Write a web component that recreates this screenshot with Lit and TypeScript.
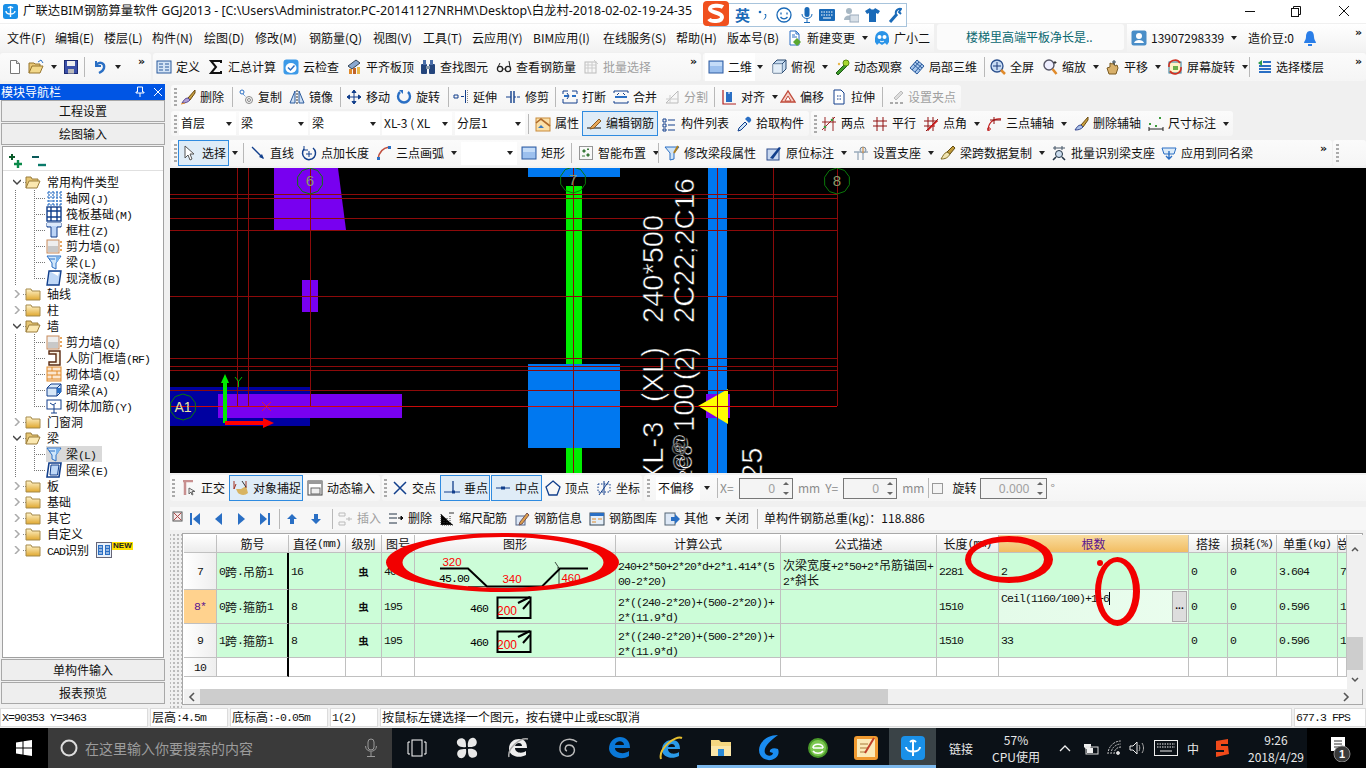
import { LitElement, html, css, svg } from 'lit';
import { customElement } from 'lit/decorators.js';

const B = '#2a6fc4', D = '#123f8c', O = '#e08a2a', Y = '#e8b84a', V = '#3a9a3a';
const I: Record<string, any> = {
  new: svg`<path d="M3.5 1.5h6l3 3v10h-9z" fill="#fff" stroke="#777"/><path d="M9.5 1.5v3h3" fill="#ddd" stroke="#777"/>`,
  open: svg`<path d="M1 14V4h5l1 1h5v2" fill="#e8c878" stroke="#96742c"/><path d="M1 14l3-7h11l-3 7z" fill="#f2d88a" stroke="#96742c"/><path d="M10 3l3-2 2 3" fill="none" stroke=${B}/>`,
  save: svg`<rect x="1.5" y="1.5" width="13" height="13" fill="#3a4fa8" stroke="#1c2a70"/><rect x="4" y="2" width="8" height="5" fill="#eee"/><rect x="5" y="10" width="6" height="4.5" fill="#bbb"/>`,
  undo: svg`<path d="M4 2v5h5" fill="none" stroke=${B} stroke-width="2"/><path d="M4 6c4-4 9-2 8 3-.5 2.500-3 4-5 5" fill="none" stroke=${B} stroke-width="2.400"/>`,
  def: svg`<rect x="1" y="2" width="14" height="12" fill="#d4e4f6" stroke="#2a5a9c"/><path d="M3 5h4M3 8h4M3 11h4M9 5h4M9 8h4M9 11h4" stroke="#2a5a9c"/>`,
  sigma: svg`<path d="M13 4V2H3l5 6-5 6h10v-2" fill="none" stroke="#111" stroke-width="2"/>`,
  cloud: svg`<rect x="0.500" y="0.500" width="15" height="15" rx="3" fill="#3c9ae8"/><ellipse cx="8" cy="9" rx="5.500" ry="5" fill="#fff"/><path d="M5 8.500l2.500 2.500 4-4.500" fill="none" stroke=${B} stroke-width="1.500"/>`,
  flush: svg`<path d="M2 7l8-6 4 3-8 6z" fill="#8aa8d0" stroke="#345"/><rect x="3" y="10" width="3" height="5" fill=${O}/><rect x="7" y="9" width="3" height="6" fill="#c0632a"/><rect x="11" y="8" width="3" height="7" fill=${Y}/>`,
  find: svg`<rect x="1" y="5" width="6" height="10" rx="1" fill="#24457c"/><rect x="9" y="5" width="6" height="10" rx="1" fill="#24457c"/><rect x="3" y="1" width="3" height="5" fill="#4a6ea8"/><rect x="10" y="1" width="3" height="5" fill="#4a6ea8"/><rect x="6" y="7" width="4" height="3" fill="#89a"/>`,
  glass: svg`<circle cx="4" cy="10" r="2.600" fill="none" stroke="#222" stroke-width="1.300"/><circle cx="12" cy="10" r="2.600" fill="none" stroke="#222" stroke-width="1.300"/><path d="M6.500 10h3M2 8l2-4M14 8l-1-6" fill="none" stroke="#222"/>`,
  batch: svg`<rect x="2" y="3" width="11" height="11" fill="none" stroke="#bbb"/><path d="M2 6h11M2 9h11M5 3v11M9 3v11M11 1l4 4" stroke="#ccc"/>`,
  r2d: svg`<rect x="1" y="2" width="14" height="12" fill="#9cc0ee" stroke="#2d5aa0"/><rect x="2" y="3" width="12" height="4" fill="#c4dcf8"/>`,
  view: svg`<path d="M2 5l4-4h9v9l-4 4H2z" fill="#c8dcf0" stroke="#2a4a70"/><path d="M2 5h9v9M11 5l4-4" fill="none" stroke="#2a4a70"/><path d="M2 5h9v9H2z" fill="#eef5fb" opacity=".7"/>`,
  orbit: svg`<path d="M2 14l9-9 2 2-9 9z" fill="#3e9a2a" stroke="#1d5a14"/><circle cx="12" cy="4" r="3" fill="#a8d830" stroke="#5a8a14"/><circle cx="5" cy="5" r="1.200" fill=${Y}/>`,
  l3d: svg`<path d="M1 9l7-8 7 6-7 8z" fill="#a8c8ee" stroke="#2a5a9c"/><path d="M4 5l7 6M6 3l7 6M3 11l7-8M6 13l7-8" stroke="#2a5a9c"/>`,
  full: svg`<circle cx="7" cy="7" r="6" fill="#c8dcf4" stroke="#2a4f8c" stroke-width="1.300"/><path d="M7 3v8M3 7h8" stroke="#1c3a7a"/><path d="M11 11l4 4" stroke=${O} stroke-width="2.500"/>`,
  zoomi: svg`<circle cx="7" cy="6" r="5" fill="#eef" stroke="#556" stroke-width="1.400"/><path d="M10.500 10l4 5" stroke=${O} stroke-width="2.500"/><path d="M13 2v3M11.500 3.500h3" stroke="#333"/>`,
  pan: svg`<path d="M3 9l2 6h7l2-6-1-3-2 1-1-3-2 1-2-1v4z" fill="#d8b06a" stroke="#7a5a20"/><path d="M10 1v5M8 3h4" stroke="#345"/>`,
  srot: svg`<rect x="2" y="3" width="12" height="11" fill="#fff3c8" stroke="#2a7a9c"/><path d="M2 8a6 6 0 0 1 11-4" fill="none" stroke="#d03020" stroke-width="1.600"/><path d="M14 8a6 6 0 0 1-11 4" fill="none" stroke="#d03020" stroke-width="1.600"/><rect x="6" y="7" width="5" height="4" fill="#6cb04a"/>`,
  floor: svg`<path d="M7 3h8M3 7h12M3 10h12M3 13h12" stroke=${B} stroke-width="2"/><path d="M6 1L2 4l4 3z" fill="#2a9a4a"/>`,
  newchg: svg`<path d="M3 1h6l3 3v11H3z" fill="#fff" stroke=${B}/><path d="M9 1v3h3M5 5h3M5 7h5" fill="none" stroke=${B}/><path d="M10 8l4 4-4 4-4-4z" fill="#5aa830"/>`,
  masc: svg`<path d="M1 8a7 7 0 0 1 14 0v4l-2 3-2-2-3 2-3-2-2 2-2-3z" fill="#2a94e8"/><circle cx="5.500" cy="7" r="2" fill="#fff"/><circle cx="10.500" cy="7" r="2" fill="#fff"/><path d="M6 11c1 1 3 1 4 0" fill="none" stroke="#fff"/>`,
  user: svg`<rect x="0.500" y="0.500" width="15" height="15" rx="2" fill="#4a8ec8"/><circle cx="8" cy="6" r="3" fill="#fff"/><path d="M3 13c1-4 9-4 10 0z" fill="#fff"/>`,
  bell: svg`<path d="M8 1c3 0 4 3 4 6 0 3 2 4 2 6H2c0-2 2-3 2-6 0-3 1-6 4-6z" fill="#2a7ee8"/><path d="M6 14h4v2H6z" fill="#2a7ee8"/>`,
  erase: svg`<path d="M15 1L8 9l2 2 5-7z" fill="#c8a040" stroke="#6a4a10"/><path d="M8 9c-3 0-4 2-6 5 3 0 6-.500 8-3z" fill="#b0a0d8" stroke="#5a4a90"/><path d="M1 15l4-1" stroke=${O}/>`,
  copy: svg`<circle cx="4" cy="3" r="2" fill="none" stroke=${B}/><circle cx="11" cy="11" r="3.500" fill="none" stroke="#888"/><circle cx="11" cy="11" r="1.500" fill="none" stroke="#888"/><path d="M5 5l3 3" stroke=${B} stroke-dasharray="1 1"/>`,
  mirror: svg`<path d="M6 2L1 14h5z" fill="#cfe0f4" stroke="#2a5a9c"/><path d="M10 2l5 12h-5z" fill="#cfe0f4" stroke="#2a5a9c"/><path d="M8 1v14" stroke="#333" stroke-dasharray="2 1"/>`,
  move: svg`<path d="M8 1v14M1 8h14M8 1L6 3.500h4zM8 15l-2-2.500h4zM1 8l2.500-2v4zM15 8l-2.500-2v4z" fill=${D} stroke=${D}/>`,
  rot: svg`<path d="M4 3a6 6 0 1 0 8 0" fill="none" stroke=${B} stroke-width="2.400"/><path d="M3 1h4v4z" fill=${B}/>`,
  extend: svg`<path d="M1 6h4v3H1zM8 7.500h3M12.500 1v13" fill="none" stroke=${D}/><path d="M14.500 1v13" stroke="#888" stroke-dasharray="1 1"/>`,
  trim: svg`<path d="M1 8h5M9 8h2M12 8h3" stroke=${D}/><path d="M6 2v12M9 2v12" stroke=${D} stroke-width="1.400"/>`,
  brk: svg`<path d="M1 5v-3h5M10 2h5v3M1 10v4h14v-4" fill="none" stroke=${D}/><path d="M2 7h4M10 7h4" stroke=${B} stroke-width="2"/><path d="M5 4l2 3-2 3" fill="none" stroke=${D}/>`,
  merge: svg`<path d="M1 4v-2h14v2M1 12v2h14v-2" fill="none" stroke=${D}/><path d="M2 8h12" stroke=${B} stroke-width="2"/><path d="M6 4l-2 2M10 4l2 2" stroke=${D}/>`,
  split: svg`<path d="M2 14L14 2v12z" fill="none" stroke="#bbb"/><path d="M2 10h12M6 6v8" stroke="#ccc"/>`,
  align: svg`<path d="M2 1v14h13" fill="none" stroke="#b02020" stroke-width="1.200"/><rect x="5" y="3" width="6" height="10" fill=${B}/><path d="M8 1v4M6 3l2-2 2 2" fill="none" stroke="#fff"/>`,
  offset: svg`<path d="M1 13l7-11 7 11z" fill="#f6d0c8" stroke="#c04a3a" stroke-width="1.300"/><path d="M5 12l3-5 3 5z" fill="#fff" stroke="#c04a3a"/>`,
  stretch: svg`<path d="M3 1h7l3 3v11H3z" fill="#fff" stroke=${D}/><path d="M6 7h4M6 10h5" stroke=${D} stroke-dasharray="1.500 1"/>`,
  gpt: svg`<path d="M13 2L6 9l2 2 7-7z" fill="#ddd" stroke="#bbb"/><path d="M2 14h3M7 14h3M12 14h3" stroke="#aaa" stroke-width="2"/>`,
  attr: svg`<rect x="1" y="2" width="14" height="13" fill="#fbe0a8" stroke="#c88a3a"/><path d="M1 7l5-4 9 7" fill="none" stroke="#b06a2a" stroke-width="1.600"/><path d="M3 12h6l-3-3z" fill="#3a7ac0"/>`,
  edit: svg`<path d="M1 12h14" stroke="#111"/><path d="M5 11l8-8 2 2-7 7-4 1z" fill="#e8a85a" stroke="#8a5a20"/>`,
  list: svg`<path d="M2 3h3v3H2zM2 8h3v3H2zM2 13h3v2H2zM7 4h7M7 9h7M7 14h7" fill="none" stroke=${D}/>`,
  pick: svg`<path d="M9 6l-6 6-1 3 3-1 6-6z" fill="#d0e6f8" stroke=${D}/><path d="M9 3l4 4 2-2c1-2-2-5-4-4z" fill=${B}/>`,
  twop: svg`<path d="M1 14L14 1M4 1v14M12 1v14M1 6h14" stroke="#901010" stroke-width=".9"/><circle cx="4" cy="11" r="1.300" fill=${V}/><circle cx="11" cy="4" r="1.300" fill=${V}/>`,
  para: svg`<path d="M1 5h14M1 10h14M5 1v14M11 1v14" stroke="#901010"/>`,
  ang: svg`<path d="M1 5h14M1 10h11M5 1v14M10 1v14M3 15L15 3" stroke="#901010"/><path d="M5 14l9-9" stroke="#d02020" stroke-width="1.600"/>`,
  arc3: svg`<path d="M2 15C2 7 7 2 15 3" fill="none" stroke="#c02020" stroke-width="1.300"/><circle cx="3" cy="13" r="1.300" fill="none" stroke="#c02020"/><path d="M8 1v7M4 4h11" stroke="#901010"/>`,
  delax: svg`<path d="M15 1L8 9l2 2 5-7z" fill="#c8a040" stroke="#6a4a10"/><path d="M8 9c-3 0-4 2-6 5 3 0 6-.500 8-3z" fill="#a8c0e8" stroke="#3a4a90"/>`,
  dim: svg`<path d="M1 11v4M15 11v4M1 13h14" stroke="#222"/><rect x="1" y="7" width="2" height="2" fill=${V}/><rect x="11" y="1" width="2" height="2" fill=${V}/><rect x="7" y="9" width="2" height="2" fill=${V}/>`,
  sel: svg`<path d="M3 1v12l3-3 2 5 2-1-2-5h4z" fill="#fff" stroke="#555"/>`,
  ln: svg`<path d="M2 2l11 11" stroke=${D} stroke-width="1.300"/><path d="M14 14l-2-5-3 3z" fill=${D}/>`,
  ptl: svg`<path d="M3 4a6.500 6.500 0 1 0 9-1" fill="none" stroke=${D} stroke-width="1.500"/><path d="M3 1v4h4" fill="none" stroke=${D}/><path d="M8 6v6M5 9h6" stroke=${D}/>`,
  arc: svg`<path d="M2 14C3 7 7 3 13 2" fill="none" stroke="#c05040" stroke-width="1.600"/><rect x="1" y="12" width="3" height="3" fill=${B}/><rect x="12" y="1" width="3" height="3" fill=${B}/>`,
  smart: svg`<rect x="1.500" y="1.500" width="13" height="13" fill="none" stroke="#333" stroke-dasharray="1 1"/><path d="M5 5h2v2H5zM9 9h2v2H9zM9 4l1 1 1-1zM4 11h3" fill="#3a7a3a" stroke="#3a7a3a"/>`,
  mods: svg`<path d="M1 2h14l-5 6v6l-4 1V8z" fill="#d0e4f6" stroke=${B}/><path d="M14 1l-4 7" stroke="#b08020" stroke-width="2"/>`,
  pos: svg`<rect x="1" y="4" width="12" height="11" fill="#c8d8f0" stroke="#2a4a8c"/><path d="M4 13L13 2l2 1-8 11z" fill=${D}/>`,
  supp: svg`<circle cx="10" cy="5" r="3" fill="#dde6f0" stroke="#789"/><path d="M1 7h14M5 7v8M10 8v7" stroke="#9ab" stroke-width="1.300"/><path d="M10 2v6" stroke=${O}/>`,
  cspan: svg`<path d="M13 1l2 2-5 6-3-2z" fill="#c09a3a" stroke="#604a10"/><path d="M7 7c-3 1-4 4-6 7 4 0 7-1 9-5z" fill="#f0e4b0" stroke="#806a20"/>`,
  bsup: svg`<path d="M2 3h12M4 1v4M11 1v4" stroke="#456"/><circle cx="8" cy="9" r="3.500" fill="#cde" stroke="#234"/><path d="M11 12l3 3M2 15l3-3" stroke="#234" stroke-width="1.600"/>`,
  apply: svg`<path d="M1 3h14l-2 6H3z" fill="#dcebf8" stroke=${B}/><path d="M8 6v7M5 11l3 3 3-3" fill="none" stroke=${B} stroke-width="1.400"/>`,
  ortho: svg`<path d="M2 1h10M4 1v14" stroke="#c89090" stroke-width="2.500"/><path d="M8 8v6l2-2 1 3 1-.500-1-3h3z" fill="#eee" stroke="#666"/>`,
  snap: svg`<path d="M3 9h5l5-3 2 7c-3 3-8 2-10 0z" fill="#d8b462"/><path d="M1 1v8M1 9L3 4M13 1v7" stroke="#a03020"/><path d="M9 1l4 6" stroke="#333"/>`,
  dyn: svg`<rect x="1" y="1" width="14" height="14" fill="#fff" stroke="#444"/><rect x="1" y="1" width="14" height="3" fill="#999"/><rect x="4" y="8" width="9" height="6" fill="#eee" stroke="#666"/>`,
  cross: svg`<path d="M2 2l12 12M14 2L2 14" stroke=${D} stroke-width="1.500"/>`,
  perp: svg`<path d="M9 1v10" stroke=${D} stroke-width="1.300"/><path d="M0 12h16" stroke=${D}/><rect x="8" y="10.500" width="3" height="3" fill=${D}/>`,
  mid: svg`<path d="M1 8h14" stroke=${D}/><rect x="6" y="6.500" width="4" height="3" fill=${D}/>`,
  vert: svg`<path d="M8 1l7 6-3 8H4L1 7z" fill="none" stroke=${D} stroke-width="1.300"/>`,
  coord: svg`<path d="M2 4h12v8H2z" fill="none" stroke=${D} stroke-dasharray="1.500 1.500"/><path d="M8 1v14M3 15L13 1" stroke=${D}/>`,
  first: svg`<rect x="3" y="2" width="2" height="12" fill=${B}/><path d="M13 2v12L6 8z" fill=${B}/>`,
  prev: svg`<path d="M12 2v12L5 8z" fill=${B}/>`,
  next: svg`<path d="M4 2v12l7-6z" fill=${B}/>`,
  last: svg`<rect x="11" y="2" width="2" height="12" fill=${B}/><path d="M3 2v12l7-6z" fill=${B}/>`,
  up: svg`<path d="M8 3l5 5h-3v5H6V8H3z" fill=${B}/>`,
  down: svg`<path d="M8 13l5-5h-3V3H6v5H3z" fill=${B}/>`,
  ins: svg`<path d="M2 2h6v3H2zM2 11h6v3H2zM9 8h6M12 6v4" fill="none" stroke="#bbb"/>`,
  del: svg`<path d="M1 3h8M1 7h8M1 12h8" stroke="#234"/><path d="M10 7h3M13 5l2 2-2 2z" fill="#111" stroke="#111"/>`,
  scale: svg`<path d="M2 3v11h12M5 9v5M8 7v7M11 5v9" stroke="#333" stroke-dasharray="1 1"/><path d="M10 2h5" stroke="#333"/>`,
  info: svg`<rect x="2" y="5" width="9" height="9" fill="#dde8f6" stroke="#568"/><path d="M13 2l-7 9-1 3 3-1 7-9z" fill="#e0a04a" stroke="#755"/>`,
  lib: svg`<rect x="1" y="2" width="14" height="12" fill="#e4eef8" stroke="#345"/><rect x="1" y="2" width="14" height="3" fill=${B}/><path d="M3 8h4M9 8h4M3 11h4" stroke=${O}/>`,
  other: svg`<rect x="1" y="2" width="10" height="12" fill="#dde8f6" stroke="#567"/><path d="M7 6h4V3l5 5-5 5v-3H7z" fill=${B}/>`,
  xclose: svg`<rect x="2" y="1" width="9" height="9" fill="#f4e8e8" stroke="#555"/><path d="M3 2l7 7M10 2l-7 7" stroke="#b04a4a"/>`,
  fgrid: svg`<path d="M1 3h14M1 7h14M1 11h14M1 15h14M3 1v14M7 1v14M11 1v14M15 1v14" stroke=${B} stroke-width="1.200" stroke-dasharray="2 1"/>`,
  raft: svg`<rect x="1" y="1" width="14" height="14" fill="#fff" stroke=${D} stroke-width="1.400"/><path d="M1 5h14M1 11h14M5 1v14M11 1v14" stroke=${D} stroke-width="1.400"/>`,
  col: svg`<path d="M1 1h14v4h-4v10H5V5H1z" fill="#bcd4f6" stroke=${D}/><rect x="1" y="1" width="14" height="3" fill="#dbe8fa"/>`,
  wall: svg`<rect x="1" y="2" width="12" height="13" fill="#eee" stroke="#c88a5a"/><rect x="2" y="8" width="10" height="6" fill="#c8c8c8"/><path d="M14 4h2M14 8h2M14 12h2" stroke=${O} stroke-width="1.400"/>`,
  beam: svg`<path d="M1 2h14l-5 7v6l-4-2V9z" fill="#cfe6fb" stroke=${B}/><path d="M10 3h5L10 9z" fill="#7bb4ec"/><path d="M3 5h6" stroke=${B}/>`,
  slab: svg`<path d="M3 1h12l-2 14H1z" fill="#bfd8f7" stroke=${D} stroke-width="1.400"/><path d="M5 2l8 0-1 4z" fill="#fff"/>`,
  door: svg`<path d="M3 1h11v14H3v-3h7V4H3z" fill="#f8f0e0" stroke="#5a2a10" stroke-width="1.400"/>`,
  brick: svg`<rect x="1" y="1" width="14" height="14" fill="#fbe6d0" stroke=${O}/><path d="M1 5h14M1 9h14M1 13h14M6 1v4M11 5v4M6 9v4" stroke=${O}/>`,
  dbeam: svg`<path d="M1 6l4-4h10v8l-4 4H1z" fill="#d8e8f8" stroke=${D}/><path d="M1 6h10v8M11 6l4-4" fill="none" stroke=${D}/><rect x="11" y="6" width="4" height="5" fill=${B}/>`,
  wallr: svg`<rect x="1" y="2" width="14" height="9" fill="#fff" stroke=${D}/><path d="M4 5l3 2 3-2M8 7v8M5 15h6" fill="none" stroke=${D}/>`,
  ring: svg`<path d="M3 1h12l-2 14H1z" fill="#fff" stroke=${D} stroke-width="1.600"/><path d="M5 3h8l-1.500 10H4z" fill="#bfd8f7" stroke=${D}/>`,
  cad: svg`<rect x="0.500" y="0.500" width="15" height="15" fill="#e8f0fa" stroke="#667"/><rect x="2" y="3" width="5" height="10" fill=${B}/><rect x="9" y="3" width="5" height="10" fill=${B}/><path d="M3 5h3M3 8h3M3 11h3M10 5h3M10 8h3M10 11h3" stroke="#fff"/>`,
};
const ic = (n: string) => html`<svg class="ic" viewBox="0 0 16 16" width="16" height="16">${I[n]}</svg>`;
const folder = (op: boolean) => op
  ? html`<svg class="fd" viewBox="0 0 16 14" width="16" height="14"><path d="M1 13V2h5l1 2h6v3" fill="#e6c674" stroke="#9a7c3a"/><path d="M1 13l3-7h11l-3 7z" fill="#fbe8b0" stroke="#9a7c3a"/></svg>`
  : html`<svg class="fd" viewBox="0 0 16 14" width="16" height="14"><defs><linearGradient id="fg" x1="0" y1="0" x2="0" y2="1"><stop offset="0" stop-color="#fff4cc"/><stop offset="1" stop-color="#e0a830"/></linearGradient></defs><path d="M1 13V2h5l1 2h8v9z" fill="url(#fg)" stroke="#a58a4a"/></svg>`;

const mix = (s: string) => s.split(/([\x00-\x7f]+)/).filter(Boolean).map(p => /^[\x00-\x7f]/.test(p) ? html`<span class="m">${p}</span>` : p);

type It = { x: number; i?: string; t?: string; a?: boolean; g?: boolean; on?: number; wh?: number; k?: string; w?: number };
type Bar = { x0: number; x1: number; items: It[]; plain?: boolean };

function cell(it: It, w: number) {
  const st = `width:${w}px`;
  if (it.k === 'sep') return html`<div class="cell" style=${st}><i class="sep"></i></div>`;
  if (it.k === 'grip') return html`<div class="cell" style=${st}><i class="grip"></i></div>`;
  if (it.k === 'more') return html`<div class="cell more" style=${st}>»</div>`;
  if (it.k === 'arrow') return html`<div class="cell" style=${st}><i class="arr"></i></div>`;
  if (it.k === 'sel') return html`<div class="cell" style=${st}><div class="sel" style="width:${it.w}px"><span>${it.t}</span><i class="arr"></i></div></div>`;
  const inner = html`${it.i ? ic(it.i) : ''}${it.t ? html`<span class="lab">${it.t}</span>` : ''}`;
  const arrow = it.a ? html`<i class="arr gap"></i>` : '';
  if (it.on) return html`<div class="cell" style=${st}><div class="it on" style="width:${it.on}px">${inner}</div>${arrow}</div>`;
  if (it.wh) return html`<div class="cell" style=${st}><div class="it wh" style="width:${it.wh}px">${inner}</div><i class="arr" style="margin-left:2px"></i></div>`;
  return html`<div class="cell ${it.g ? 'gr' : ''}" style=${st}><div class="it">${inner}${arrow}</div></div>`;
}
function bar(b: Bar, ml: number) {
  return html`<div class="bar ${b.plain ? 'plain' : ''}" style="width:${b.x1 - b.x0}px;margin-left:${ml}px;padding-left:${b.items[0].x - b.x0}px">
    ${b.items.map((it, n) => cell(it, (b.items[n + 1]?.x ?? b.x1) - it.x))}</div>`;
}
function row(cls: string, start: number, bars: Bar[]) {
  let p = start;
  return html`<div class="row ${cls}">${bars.map(b => { const m = b.x0 - p; p = b.x1; return bar(b, m); })}</div>`;
}

const R1: Bar[] = [
  { x0: 0, x1: 151, items: [{ x: 7, i: 'new' }, { x: 28, i: 'open', a: true }, { x: 63, i: 'save' }, { x: 84, k: 'sep' }, { x: 92, i: 'undo', a: true }, { x: 138, k: 'more' }] },
  { x0: 153, x1: 701, items: [{ x: 156, i: 'def', t: '定义' }, { x: 208, i: 'sigma', t: '汇总计算' }, { x: 283, i: 'cloud', t: '云检查' }, { x: 346, i: 'flush', t: '平齐板顶' }, { x: 420, i: 'find', t: '查找图元' }, { x: 496, i: 'glass', t: '查看钢筋量' }, { x: 583, i: 'batch', t: '批量选择', g: true }, { x: 690, k: 'more' }] },
  { x0: 703, x1: 1366, items: [{ x: 705, i: 'r2d', t: '二维', wh: 50 }, { x: 771, i: 'view', t: '俯视', a: true }, { x: 834, i: 'orbit', t: '动态观察' }, { x: 909, i: 'l3d', t: '局部三维' }, { x: 984, k: 'sep' }, { x: 990, i: 'full', t: '全屏' }, { x: 1042, i: 'zoomi', t: '缩放', a: true }, { x: 1104, i: 'pan', t: '平移', a: true }, { x: 1167, i: 'srot', t: '屏幕旋转', a: true }, { x: 1249, k: 'sep' }, { x: 1256, i: 'floor', t: '选择楼层' }, { x: 1355, k: 'more' }] },
];
const R2: Bar[] = [{ x0: 171, x1: 961, items: [{ x: 174, k: 'grip' }, { x: 180, i: 'erase', t: '删除' }, { x: 232, k: 'sep' }, { x: 238, i: 'copy', t: '复制' }, { x: 289, i: 'mirror', t: '镜像' }, { x: 340, k: 'sep' }, { x: 346, i: 'move', t: '移动' }, { x: 396, i: 'rot', t: '旋转' }, { x: 448, k: 'sep' }, { x: 453, i: 'extend', t: '延伸' }, { x: 505, i: 'trim', t: '修剪' }, { x: 555, k: 'sep' }, { x: 562, i: 'brk', t: '打断' }, { x: 613, i: 'merge', t: '合并' }, { x: 664, i: 'split', t: '分割', g: true }, { x: 714, k: 'sep' }, { x: 721, i: 'align', t: '对齐', a: true }, { x: 780, i: 'offset', t: '偏移' }, { x: 831, i: 'stretch', t: '拉伸' }, { x: 882, k: 'sep' }, { x: 888, i: 'gpt', t: '设置夹点', g: true }] }];
const R3: Bar[] = [
  { x0: 171, x1: 809, items: [{ x: 174, k: 'grip' }, { x: 179, k: 'sel', t: '首层', w: 57 }, { x: 239, k: 'sel', t: '梁', w: 69 }, { x: 310, k: 'sel', t: '梁', w: 70 }, { x: 382, k: 'sel', t: 'XL-3 ( XL', w: 70 }, { x: 455, k: 'sel', t: '分层1', w: 70 }, { x: 528, k: 'sep' }, { x: 535, i: 'attr', t: '属性' }, { x: 582, i: 'edit', t: '编辑钢筋', on: 76 }, { x: 661, i: 'list', t: '构件列表' }, { x: 736, i: 'pick', t: '拾取构件' }] },
  { x0: 811, x1: 1233, items: [{ x: 814, k: 'grip' }, { x: 821, i: 'twop', t: '两点' }, { x: 872, i: 'para', t: '平行' }, { x: 923, i: 'ang', t: '点角', a: true }, { x: 986, i: 'arc3', t: '三点辅轴', a: true }, { x: 1073, i: 'delax', t: '删除辅轴' }, { x: 1148, i: 'dim', t: '尺寸标注', a: true }] },
];
const R4: Bar[] = [
  { x0: 171, x1: 1332, items: [{ x: 174, k: 'grip' }, { x: 178, i: 'sel', t: '选择', on: 51 }, { x: 232, k: 'arrow' }, { x: 243, k: 'sep' }, { x: 250, i: 'ln', t: '直线' }, { x: 301, i: 'ptl', t: '点加长度' }, { x: 376, i: 'arc', t: '三点画弧', a: true }, { x: 461, k: 'sel', t: '', w: 56 }, { x: 521, i: 'r2d', t: '矩形' }, { x: 571, k: 'sep' }, { x: 578, i: 'smart', t: '智能布置', a: true }, { x: 658, k: 'sep' }, { x: 664, i: 'mods', t: '修改梁段属性' }, { x: 766, i: 'pos', t: '原位标注', a: true }, { x: 853, i: 'supp', t: '设置支座', a: true }, { x: 940, i: 'cspan', t: '梁跨数据复制', a: true }, { x: 1051, i: 'bsup', t: '批量识别梁支座' }, { x: 1161, i: 'apply', t: '应用到同名梁' }, { x: 1320, k: 'more' }] },
  { x0: 1333, x1: 1366, items: [{ x: 1336, k: 'grip' }] },
];
const R5a: Bar[] = [
  { x0: 170, x1: 380, items: [{ x: 172, k: 'grip' }, { x: 181, i: 'ortho', t: '正交' }, { x: 229, i: 'snap', t: '对象捕捉', on: 74 }, { x: 307, i: 'dyn', t: '动态输入' }] },
  { x0: 382, x1: 642, items: [{ x: 384, k: 'grip' }, { x: 392, i: 'cross', t: '交点' }, { x: 440, i: 'perp', t: '垂点', on: 50 }, { x: 491, i: 'mid', t: '中点', on: 51 }, { x: 545, i: 'vert', t: '顶点' }, { x: 596, i: 'coord', t: '坐标' }] },
];
const R6: Bar[] = [{
  x0: 170, x1: 1366, plain: true, items: [{ x: 171, i: 'xclose' }, { x: 187, i: 'first' }, { x: 210, i: 'prev' }, { x: 234, i: 'next' }, { x: 257, i: 'last' }, { x: 279, k: 'sep' }, { x: 284, i: 'up' }, { x: 308, i: 'down' }, { x: 332, k: 'sep' }, { x: 337, i: 'ins', t: '插入', g: true }, { x: 388, i: 'del', t: '删除' }, { x: 439, i: 'scale', t: '缩尺配筋' }, { x: 514, i: 'info', t: '钢筋信息' }, { x: 589, i: 'lib', t: '钢筋图库' }, { x: 664, i: 'other', t: '其他', a: true }, { x: 725, t: '关闭' }, { x: 757, k: 'sep' }, { x: 764, t: '单构件钢筋总重(kg)：118.886' }],
}];
const MENU: It[] = [['文件(F)', 7], ['编辑(E)', 55], ['楼层(L)', 104], ['构件(N)', 152], ['绘图(D)', 204], ['修改(M)', 255], ['钢筋量(Q)', 309], ['视图(V)', 373], ['工具(T)', 423], ['云应用(Y)', 472], ['BIM应用(I)', 533], ['在线服务(S)', 603], ['帮助(H)', 676], ['版本号(B)', 727]].map(([t, x]) => ({ t: t as string, x: x as number }));
MENU.push({ x: 787, i: 'newchg', t: '新建变更', a: true }, { x: 874, i: 'masc', t: '广小二' });
const MENU2: It[] = [{ x: 1131, i: 'user', t: '13907298339', a: true }, { x: 1248, t: '造价豆:0' }, { x: 1302, i: 'bell' }, { x: 1355, k: 'more' }];

const TREE: any[] = [
  { o: 1, t: '常用构件类型' }, { i: 'fgrid', t: '轴网(J)' }, { i: 'raft', t: '筏板基础(M)' }, { i: 'col', t: '框柱(Z)' }, { i: 'wall', t: '剪力墙(Q)' }, { i: 'beam', t: '梁(L)' }, { i: 'slab', t: '现浇板(B)', l: 1 },
  { t: '轴线' }, { t: '柱' }, { o: 1, t: '墙' }, { i: 'wall', t: '剪力墙(Q)' }, { i: 'door', t: '人防门框墙(RF)' }, { i: 'brick', t: '砌体墙(Q)' }, { i: 'dbeam', t: '暗梁(A)' }, { i: 'wallr', t: '砌体加筋(Y)', l: 1 },
  { t: '门窗洞' }, { o: 1, t: '梁' }, { i: 'beam', t: '梁(L)', s: 1 }, { i: 'ring', t: '圈梁(E)', l: 1 },
  { t: '板' }, { t: '基础' }, { t: '其它' }, { t: '自定义' }, { t: 'CAD识别', n: 1 },
];
const WS = [184, 217, 289, 346, 382, 415, 616, 781, 937, 999, 1189, 1228, 1277, 1338, 1347];
const COLS = WS.slice(1).map((x, i) => `${x - WS[i]}px`).join(' ');
const HEAD = ['', '筋号', '直径(mm)', '级别', '图号', '图形', '计算公式', '公式描述', '长度(mm)', '根数', '搭接', '损耗(%)', '单重(kg)', '总'];

const poly = (cx: number, cy: number, r: number) => Array.from({ length: 10 }, (_, i) => `${(cx + r * Math.cos(i * Math.PI / 5 + .3)).toFixed(1)},${(cy + r * Math.sin(i * Math.PI / 5 + .3)).toFixed(1)}`).join(' ');
const oval = (cx: number, cy: number, rx: number, ry: number) => `M${cx - rx} ${cy}a${rx} ${ry} 0 1 0 ${2 * rx} 0a${rx} ${ry} 0 1 0 ${-2 * rx} 0z`;

@customElement('app-root')
export class AppRoot extends LitElement {
  static styles = css`
    :host { display: block; width: 1366px; height: 768px; overflow: hidden; position: relative; background: #f0f0f0; font: 12px/1.2 "Noto Sans CJK SC", "Noto Sans", sans-serif; color: #111; }
    * { box-sizing: border-box; }
    .m { font: 11.5px "Liberation Mono", monospace; letter-spacing: -.9px; }
    .ic { flex: none; display: block; }
    .title { height: 23px; background: #fff; display: flex; align-items: center; padding-left: 3px; position: relative; z-index: 2; font-family: "Noto Sans", "Noto Sans CJK SC", sans-serif; }
    .title .tx { margin-left: 5px; white-space: nowrap; font-size: 12.4px; flex: none; width: 680px; overflow: visible; }
    .logo { width: 15px; height: 15px; flex: none; }
    .sg { width: 198px; height: 24px; margin-left: -20px; margin-top: 6px; align-self: flex-start; border: 1px solid #a8c4dc; background: #fff; display: flex; align-items: center; flex: none; padding-left: 20px; margin-top: 3px; }
    .sgs { width: 26px; height: 27px; flex: none; z-index: 1; align-self: flex-start; }
    .sg b { color: #1a6ab8; font-size: 15px; margin-left: 5px; margin-right: 8px; }
    .sg svg { margin-right: 6px; flex: none; }
    .win { flex: 1; display: flex; justify-content: flex-end; align-items: center; }
    .win svg { display: block; }
    .row { display: flex; flex: none; }
    .bar { display: flex; align-items: center; height: 100%; background: linear-gradient(#fbfbfb, #f5f5f5); border-radius: 3px; flex: none; }
    .bar.plain { background: none; }
    .cell { flex: none; height: 100%; display: flex; align-items: center; white-space: nowrap; }
    .gr { color: #a0a0a0; }
    .it { display: flex; align-items: center; gap: 4px; height: 100%; }
    .it.on { background: #dfecf7; border: 1px solid #2f8be0; padding-left: 3px; }
    .it.wh { background: #fff; padding-left: 3px; }
    .sep { width: 1px; height: 20px; background: #b8b8b8; display: block; }
    .grip { width: 3px; height: 18px; display: block; background: repeating-linear-gradient(#aaa 0 2px, transparent 2px 4px); }
    .more { font: bold 11px/1 "DejaVu Sans", sans-serif; align-items: flex-start; padding-top: 3px; }
    .arr { display: block; width: 0; height: 0; border: 3px solid transparent; border-top: 4px solid #222; border-bottom: 0; flex: none; }
    .arr.gap { margin-left: 3px; }
    .sel { background: #fff; height: 23px; display: flex; align-items: center; justify-content: space-between; padding: 0 4px 0 2px; font-size: 12px; }
    .r1 { height: 32px; padding: 1px 0 3px; }
    .menu { height: 29px; position: relative; padding-top: 1px; }
    .menu .bar { background: linear-gradient(#fff, #f2f2f2); border-radius: 0; }
    .tbox { background: #fbfbfb; width: 187px; height: 26px; margin-left: 3px; border-radius: 3px; color: #0a6870; display: flex; align-items: center; padding-left: 29px; flex: none; }
    .body { display: flex; height: 624px; }
    .left { width: 170px; flex: none; display: flex; flex-direction: column; padding: 0 5px 3px 0; }
    .lhead { height: 16px; background: #0055e4; color: #fff; display: flex; align-items: center; padding-left: 1px; font-size: 12px; flex: none; }
    .lhead span { flex: 1; }
    .lhead svg { margin-right: 4px; }
    .lbtn { height: 22px; flex: none; margin: 0 0 1px 1px; border: 1px solid #a8a8a8; background: #eee; text-align: center; line-height: 20px; }
    .treeb { flex: 1; margin: 0 1px 1px 2px; border: 1px solid #a0a0a0; background: #fff; display: flex; flex-direction: column; min-height: 0; }
    .ttop { height: 24px; flex: none; background: #fff; border-bottom: 1px solid #e0e0e0; padding: 6px 0 0 5px; display: flex; gap: 7px; margin-bottom: 3px; }
    .tr { height: 16px; display: flex; align-items: center; white-space: nowrap; flex: none; }
    .tr.top { padding-left: 10px; background: repeating-linear-gradient(90deg, #888 0 1px, transparent 1px 2px) 20px 8px / 4px 1px no-repeat; }
    .tr.top .fd { margin-left: 4px; margin-right: 6px; }
    .chev { width: 8px; height: 8px; flex: none; }
    .tr.ch { padding-left: 43px;
      background:
        repeating-linear-gradient(#777 0 1px, transparent 1px 2px) 12px 0 / 1px 100% no-repeat,
        repeating-linear-gradient(#777 0 1px, transparent 1px 2px) 31px 0 / 1px 100% no-repeat,
        repeating-linear-gradient(90deg, #777 0 1px, transparent 1px 2px) 31px 8px / 12px 1px no-repeat; }
    .tr.ch.l { background:
        repeating-linear-gradient(#777 0 1px, transparent 1px 2px) 12px 0 / 1px 100% no-repeat,
        repeating-linear-gradient(#777 0 1px, transparent 1px 2px) 31px 0 / 1px 8px no-repeat,
        repeating-linear-gradient(90deg, #777 0 1px, transparent 1px 2px) 31px 8px / 12px 1px no-repeat; }
    .tr .tt { margin-left: 4px; padding-right: 6px; }
    .nod { display: flex; align-items: center; height: 16px; }
    .nod.s { background: #d9d9d9; }
    .new { color: #222; background: #ffe000; font: bold 8px/8px "Liberation Sans"; align-self: flex-start; padding: 0 1px; }
    .right { width: 1196px; flex: none; display: flex; flex-direction: column; }
    .r2 { height: 26px; padding-top: 1px; padding-bottom: 1px; }
    .r3 { height: 28px; padding: 1px 0 2px; }
    .r4 { height: 30px; padding: 2px 0 2px; }
    .r5 { height: 30px; padding: 2px 0 2px; display: flex; }
    .canvas { height: 305px; display: block; background: #000; flex: none; }
    .snapx { width: 724px; margin-left: 2px; height: 100%; background: linear-gradient(#fbfbfb, #f5f5f5); border-radius: 3px; display: flex; align-items: center; padding-left: 3px; flex: none; color: #8c8c8c; }
    .snapx .grip { margin-right: 6px; flex: none; }
    .sel2 { width: 44px; height: 23px; background: #fff; color: #111; padding-left: 2px; display: flex; align-items: center; flex: none; }
    .btn2 { width: 14px; display: flex; justify-content: center; margin-right: 3px; flex: none; }
    .snapx .lb { width: 19px; margin-left: 2px; flex: none; }
    .snapx .lb2 { width: 18px; margin-left: 5px; flex: none; }
    .spin { width: 54px; height: 21px; border: 1px solid #777; background: #f4f4f4; display: flex; align-items: center; justify-content: flex-end; padding-right: 3px; margin-right: 5px; color: #a0a0a0; font: 12px "Noto Sans"; gap: 8px; flex: none; }
    .spin.w { width: 67px; margin: 0 3px 0 4px; }
    .spin i { display: flex; flex-direction: column; gap: 7px; }
    .spin i::before { content: ""; border: 3px solid transparent; border-bottom: 3px solid #666; border-top: 0; }
    .spin i::after { content: ""; border: 3px solid transparent; border-top: 3px solid #666; border-bottom: 0; }
    .chk { width: 11px; height: 11px; border: 1px solid #999; background: #f4f4f4; margin: 0 9px 0 3px; flex: none; }
    .sepm { margin-left: 4px; flex: none; }
    .panel { height: 205px; display: flex; flex-direction: column; }
    .phead { height: 30px; display: flex; padding-top: 4px; flex: none; }
    .phead .row { height: 23px; background: #f7f7f7; }
    .pbody { flex: 1; display: flex; min-height: 0; }
    .gut { width: 12px; flex: none; background: radial-gradient(circle, #bbb 1px, transparent 1.200px) 2px 0 / 4px 4px; }
    .frame { width: 1181px; height: 172px; flex: none; border: 1px solid #a8a8a8; background: #fff; display: flex; flex-direction: column; padding: 1px 0 0 1px; }
    .upper { display: flex; height: 154px; flex: none; }
    .tblwrap { width: 1163px; flex: none; overflow: hidden; }
    .tbl { display: grid; grid-template-rows: 18px 37px 34px 34px 19px; width: 1163px; }
    .c { border-right: 1px solid #c0c0c0; border-bottom: 1px solid #c0c0c0; padding: 0 2px; display: flex; align-items: center; overflow: hidden; background: #ccfdd8; line-height: 13px; min-width: 0; white-space: nowrap; }
    .c.wrap { white-space: normal; word-break: break-all; display: block; align-self: stretch; padding-top: 5px; }
    .c.wrap.t4 { padding-top: 4px; }
    .c.h { background: linear-gradient(#fff, #ececec); justify-content: center; font-size: 12px; padding: 0; }
    .c.h.act { background: linear-gradient(#f9dda0, #f2bd62); color: #5a1490; }
    .c.n { background: linear-gradient(90deg, #fff, #eee); justify-content: center; }
    .c.n.act { background: #ffd28e; color: #5a1490; }
    .c.e { background: #fff; }
    .c.cn { justify-content: center; font-size: 10.5px; font-weight: bold; }
    .c.div { border-right: 2px solid #000; }
    .c.sv { padding: 0; }
    .c.ed { background: linear-gradient(90deg, #e4fbe9, #eafdee); padding: 2px 1px 0 2px; align-items: flex-start; justify-content: space-between; }
    .c.ed b { width: 15px; height: 31px; background: #ddd; border: 1px solid #aaa; font: bold 10px/28px "Liberation Sans"; text-align: center; flex: none; margin-top: -1px; }
    .c.ed u { text-decoration: none; border-right: 1px solid #000; }
    .c svg { display: block; flex: none; }
    .vs { width: 16px; flex: none; background: #f0f0f0; display: flex; flex-direction: column; align-items: stretch; }
    .vs .sp { height: 102px; padding-top: 6px; }
    .vs .th { height: 33px; background: #cdcdcd; flex: none; }
    .vs .sp2 { flex: 1; display: flex; align-items: center; justify-content: center; }
    .hs { height: 15px; display: flex; background: #f0f0f0; flex: none; align-items: center; }
    .hs .ha { width: 16px; flex: none; display: flex; justify-content: center; }
    .hs .th { width: 688px; height: 15px; background: #cdcdcd; flex: none; }
    .hs .sp { width: 450px; flex: none; }
    .status { height: 20px; display: flex; gap: 2px; flex: none; padding-bottom: 1px; }
    .status div { background: #fff; border: 1px solid #dcdcdc; padding-left: 1px; display: flex; align-items: center; flex: none; white-space: nowrap; }
    .task { height: 40px; background: #0b1117; display: flex; color: #e8e8e8; }
    .start { width: 48px; background: #000; display: flex; align-items: center; justify-content: center; flex: none; }
    .search { width: 344px; background: #3a3a3a; display: flex; align-items: center; color: #9c9c9c; font-size: 14px; padding-left: 12px; flex: none; }
    .search span { flex: 1; margin-left: 7px; }
    .search svg { flex: none; }
    .slot { flex: none; display: flex; align-items: center; justify-content: center; flex-direction: column; line-height: 17px; border-bottom: 3px solid transparent; text-align: center; padding-top: 3px; }
    .slot.u { border-bottom-color: #7cb8ec; }
    .slot.ac { background: #3a4347; border-bottom-color: #7cb8ec; }
    .slot.nt { background: #000; padding-left: 4px; }
    .over { position: absolute; left: 0; top: 0; pointer-events: none; z-index: 3; }
  `;

  canvas() {
    const hs = [194, 198, 218, 230, 296, 358, 366, 370, 390];
    const vs: [number, number][] = [[237, 406], [248, 406], [310, 406], [573, 473], [717, 473], [773, 406], [837, 406]];
    const txt = (x: number, y: number, t: string, fs = 29) => svg`<text transform="translate(${x},${y}) rotate(-90)" font-size=${fs} fill="#fff" stroke="#000" stroke-width=".5" font-family="Liberation Sans">${t}</text>`;
    return html`<svg class="canvas" width="1196" height="305" viewBox="170 168 1196 305">
      <rect x="170" y="387" width="140" height="39" fill="#0000a0"/>
      <path d="M274 168h64l8 62h-72z" fill="#7800f0"/>
      <rect x="302" y="280" width="16" height="32" fill="#7800f0"/>
      <rect x="218" y="394" width="184" height="24" fill="#7800f0"/>
      <rect x="566" y="186" width="16" height="287" fill="#00ee00"/>
      <rect x="528" y="168" width="92" height="9" fill="#0078f0"/>
      <rect x="528" y="364" width="92" height="84" fill="#0078f0"/>
      <rect x="708" y="168" width="19" height="305" fill="#0078f0"/>
      <rect x="706" y="394" width="24" height="24" fill="#7800f0"/>
      <path d="M698 406l30-17v35z" fill="#ffff00"/>
      ${hs.map(y => svg`<path d="M170 ${y + .5}H837" stroke="#8c0a0a"/>`)}
      <path d="M170 406.500H837" stroke="#c80a0a"/>
      ${vs.map(([x, e]) => svg`<path d="M${x + .5} 168V${e}" stroke="#8c0a0a"/>`)}
      ${txt(663, 323, '240*500')}${txt(663, 402, '(XL)')}${txt(663, 483, 'XL-3')}
      ${txt(694, 323, '2C22')}${txt(694, 254, ';', 26)}${txt(694, 245, '2C16', 28)}${txt(694, 380, '(2)', 27)}${txt(694, 432, '100')}
      ${txt(686, 472, '@@', 19)}${txt(692, 480, '2C8', 19)}${txt(683, 456, '@', 14)}
      ${txt(762, 480, '25')}
      ${[[310, 181, '6'], [573, 180, '7'], [837, 181, '8']].map(([x, y, t]) => svg`<polygon points=${poly(x as number, y as number, 13)} fill="none" stroke="#0a7a0a"/><text x=${x} y=${(y as number) + 5} text-anchor="middle" font-size="15" font-family="Liberation Sans" fill="#8a9a6a">${t}</text>`)}
      <polygon points=${poly(183, 407, 13)} fill="none" stroke="#0a7a0a"/>
      <text x="183" y="412" text-anchor="middle" font-size="14" font-family="Liberation Sans" fill="#e8e8a0">A1</text>
      <path d="M225 423V380" stroke="#00ee00" stroke-width="4"/><path d="M225 374l-4 9h8z" fill="#00ee00"/>
      <path d="M225 423h38" stroke="#f00" stroke-width="4"/><path d="M274 423l-11-5v10z" fill="#f00"/>
      <path d="M235 377l3.500 4.500 3.500-4.500M238.500 381.500V387" fill="none" stroke="#00ee00" stroke-width=".8"/>
      <path d="M262 402l9 9M271 402l-9 9" stroke="#f02020" stroke-width=".8"/>
    </svg>`;
  }

  grid() {
    const hoop = (dy = 0) => svg`<svg width="200" height="33" viewBox="415 ${590 + dy} 200 33">
        <text x="479" y="${612 + dy}" text-anchor="middle" font-family="Liberation Mono" font-size="11.500" letter-spacing="-.9">460</text>
        <path d="M497.500 ${597.5 + dy}H530.500V${618 + dy}H497.500Z" fill="none" stroke="#000" stroke-width="2"/>
        <path d="M518 ${603 + dy}L530 ${597 + dy}M523 ${609 + dy}L530 ${601 + dy}" stroke="#000" stroke-width="2"/>
        <text x="507" y="${615 + dy}" text-anchor="middle" font-family="Liberation Sans" font-size="12" fill="#f00">200</text></svg>`;
    const sym = html`<span>虫</span>`;
    return html`<div class="tbl" style="grid-template-columns:${COLS}">
      ${HEAD.map((h, i) => html`<div class="c h ${i === 9 ? 'act' : ''}">${mix(h)}</div>`)}
      <div class="c n"><span class="m">7</span></div>
      <div class="c div">${mix('0跨.吊筋1')}</div><div class="c"><span class="m">16</span></div><div class="c cn">${sym}</div><div class="c"><span class="m">406</span></div>
      <div class="c sv"><svg width="200" height="36" viewBox="415 553 200 36">
        <path d="M440 568.500H468L487 586.500H542L560 568.500H588" fill="none" stroke="#000" stroke-width="2"/>
        <path d="M468 586.500H488M555 562l4 6-2 0M559 570v16" fill="none" stroke="#000" stroke-width=".7"/>
        <text x="452" y="566" text-anchor="middle" font-family="Liberation Sans" font-size="11.500" fill="#f00">320</text>
        <text x="454" y="582" text-anchor="middle" font-family="Liberation Mono" font-size="11.500" letter-spacing="-.9">45.00</text>
        <text x="512" y="583" text-anchor="middle" font-family="Liberation Sans" font-size="11.500" fill="#f00">340</text>
        <text x="571" y="582" text-anchor="middle" font-family="Liberation Sans" font-size="11.500" fill="#f00">460</text>
      </svg></div>
      <div class="c wrap"><span class="m">240+2*50+2*20*d+2*1.414*(500-2*20)</span></div>
      <div class="c wrap">${mix('次梁宽度+2*50+2*吊筋锚固+2*斜长')}</div>
      <div class="c"><span class="m">2281</span></div><div class="c"><span class="m">2</span></div><div class="c"><span class="m">0</span></div><div class="c"><span class="m">0</span></div><div class="c"><span class="m">3.604</span></div><div class="c"><span class="m">7</span></div>

      <div class="c n act"><span class="m">8*</span></div>
      <div class="c div">${mix('0跨.箍筋1')}</div><div class="c"><span class="m">8</span></div><div class="c cn">${sym}</div><div class="c"><span class="m">195</span></div>
      <div class="c sv">${hoop(0)}</div>
      <div class="c wrap t4"><span class="m">2*((240-2*20)+(500-2*20))+2*(11.9*d)</span></div><div class="c"></div>
      <div class="c"><span class="m">1510</span></div>
      <div class="c ed"><u class="m">Ceil(1160/100)+1+6</u><b>...</b></div>
      <div class="c"><span class="m">0</span></div><div class="c"><span class="m">0</span></div><div class="c"><span class="m">0.596</span></div><div class="c"><span class="m">1</span></div>

      <div class="c n"><span class="m">9</span></div>
      <div class="c div">${mix('1跨.箍筋1')}</div><div class="c"><span class="m">8</span></div><div class="c cn">${sym}</div><div class="c"><span class="m">195</span></div>
      <div class="c sv">${hoop(34)}</div>
      <div class="c wrap t4"><span class="m">2*((240-2*20)+(500-2*20))+2*(11.9*d)</span></div><div class="c"></div>
      <div class="c"><span class="m">1510</span></div><div class="c"><span class="m">33</span></div>
      <div class="c"><span class="m">0</span></div><div class="c"><span class="m">0</span></div><div class="c"><span class="m">0.596</span></div><div class="c"><span class="m">1</span></div>

      <div class="c n"><span class="m">10</span></div>
      <div class="c e div"></div>${Array.from({ length: 12 }, () => html`<div class="c e"></div>`)}
    </div>`;
  }

  taskbar() {
    const sl = (w: number, c: any, cls = '') => html`<div class="slot ${cls}" style="width:${w}px">${c}</div>`;
    return html`<div class="task">
      <div class="start"><svg width="16" height="16" viewBox="0 0 16 16"><path d="M0 2.500l6.500-1V7.500H0zM7.500 1.300L16 0v7.500H7.500zM0 8.500h6.500v6L0 13.500zM7.500 8.500H16V16l-8.500-1.300z" fill="#fff"/></svg></div>
      <div class="search"><svg width="18" height="18" viewBox="0 0 18 18"><circle cx="9" cy="9" r="7.500" fill="none" stroke="#ddd" stroke-width="2"/></svg><span>在这里输入你要搜索的内容</span>
        <svg width="14" height="20" viewBox="0 0 14 20" style="margin-right:14px"><rect x="4" y="1" width="6" height="11" rx="3" fill="none" stroke="#999"/><path d="M1.500 8c0 7 11 7 11 0M7 14v4M3 18.500h8" fill="none" stroke="#999"/></svg></div>
      ${sl(49, html`<svg width="20" height="18" viewBox="0 0 20 18"><rect x="5" y="1" width="10" height="16" fill="none" stroke="#fff"/><path d="M3 3H1v12h2M17 3h2v12h-2" fill="none" stroke="#fff"/></svg>`)}
      ${sl(51, html`<svg width="24" height="24" viewBox="0 0 24 24" fill="#e8e8e8"><path d="M11 11C5 12 1 9 2 5c1-3 6-4 8-1 1 2 1 4 1 7zM13 11c-1-6 2-10 6-9 3 1 4 6 1 8-2 1-4 1-7 1zM13 13c6-1 10 2 9 6-1 3-6 4-8 1-1-2-1-4-1-7zM11 13c1 6-2 10-6 9-3-1-4-6-1-8 2-1 4-1 7-1z"/></svg>`)}
      ${sl(51, html`<svg width="24" height="26" viewBox="0 0 24 26"><path d="M3 14C3 7 8 4 13 4c6 0 8 4 8 9H9c0 5 7 6 11 3v4c-7 4-17 1-17-6zm6-3h7c0-4-6-4-7 0z" fill="#eee"/><path d="M3 22C1 14 14 2 22 4" fill="none" stroke="#aaa" stroke-width="1.500"/></svg>`)}
      ${sl(50, html`<svg width="22" height="22" viewBox="0 0 22 22" fill="none" stroke="#bbb" stroke-width="1.400"><path d="M20 5C14 0 4 2 3 10c-1 8 8 12 13 7 3-4 1-9-4-9-4 0-5 5-2 6"/></svg>`)}
      ${sl(52, html`<svg width="24" height="24" viewBox="0 0 24 24"><path d="M2 13C2 5 8 1 13 1c6 0 10 4 10 11H8c0 5 9 7 14 3v5c-8 5-19 1-20-7zm6-4h9c0-5-8-5-9 0z" fill="#0a78d8"/></svg>`)}
      ${sl(52, html`<svg width="24" height="26" viewBox="0 0 24 26"><path d="M3 15C3 8 8 5 13 5c6 0 8 4 8 9H9c0 5 7 6 11 3v4c-7 4-17 1-17-6zm6-3h7c0-4-6-4-7 0z" fill="#2a9ae8"/><path d="M2 24C-1 14 16 0 23 3" fill="none" stroke="#e8c030" stroke-width="2"/></svg>`)}
      ${sl(48, html`<svg width="22" height="20" viewBox="0 0 22 20"><path d="M1 2h8l2 2h10v14H1z" fill="#f4d680"/><rect x="1" y="8" width="20" height="10" fill="#fbe6a8"/><rect x="8" y="11" width="6" height="7" fill="#2a8ad8"/></svg>`, 'u')}
      ${sl(48, html`<svg width="26" height="28" viewBox="0 0 26 28"><path d="M22 1C10 1 3 9 3 16c0 7 6 11 12 10 6-1 9-6 7-11-6-2-9 1-8 3l3 1c0 3-6 4-8 0-2-6 5-12 13-18z" fill="#1a8cf0"/></svg>`, 'u')}
      ${sl(50, html`<svg width="24" height="26" viewBox="0 0 24 26"><circle cx="12" cy="13" r="9" fill="#7cc850" stroke="#4a9a2a" stroke-width="2"/><path d="M7 13h10M7 16c2 3 8 3 10 0M7 13c0-5 10-5 10 0" fill="none" stroke="#fff" stroke-width="1.600"/></svg>`, 'u')}
      ${sl(46, html`<svg width="24" height="26" viewBox="0 0 24 26"><rect x="0" y="1" width="24" height="24" rx="3" fill="#f09a30"/><rect x="3" y="4" width="18" height="18" fill="#fbeab8"/><path d="M6 9h8M6 13h8M6 17h6" stroke="#a87a3a"/><path d="M20 3L11 18" stroke="#c0402a" stroke-width="2"/></svg>`, 'u')}
      ${sl(47, html`<svg width="24" height="24" viewBox="0 0 24 24"><rect width="24" height="24" rx="4" fill="#1a90e8"/><path d="M12 4v16M5 11c0 6 14 6 14 0M9 6c2-2 4-2 6 0" fill="none" stroke="#fff" stroke-width="2"/></svg>`, 'ac')}
      ${sl(50, html`<span>链接</span>`)}
      ${sl(60, html`<span>57%</span><span>CPU使用</span>`)}
      ${sl(5, '')}
      ${sl(28, html`<svg width="12" height="8" viewBox="0 0 12 8"><path d="M1 7l5-5 5 5" fill="none" stroke="#eee" stroke-width="1.300"/></svg>`)}
      ${sl(22, html`<svg width="18" height="16" viewBox="0 0 18 16"><path d="M5 1v3M8 1v3M3 4h7v3l-2 2H5L3 7z" fill="#eee"/><rect x="5" y="7" width="12" height="7" fill="none" stroke="#ddd"/><rect x="6" y="8" width="6" height="5" fill="#eee"/></svg>`)}
      ${sl(28, html`<svg width="16" height="16" viewBox="0 0 16 16" fill="none" stroke="#ccc"><path d="M1 14a13 13 0 0 1 13-13M4 14a10 10 0 0 1 10-10M7 14a7 7 0 0 1 7-7" stroke-dasharray="2 1"/><circle cx="11" cy="13" r="1.500" fill="#eee"/></svg>`)}
      ${sl(16, html`<svg width="16" height="16" viewBox="0 0 16 16" fill="none" stroke="#eee"><path d="M1 6h3l4-4v12l-4-4H1z"/><path d="M10 5c1 2 1 4 0 6M13 3c2 3 2 7 0 10" stroke="#aaa"/></svg>`)}
      ${sl(42, html`<svg width="24" height="16" viewBox="0 0 24 16" fill="none" stroke="#eee"><rect x=".5" y=".5" width="23" height="15"/><path d="M3 4h18M3 7h18" stroke-dasharray="1.500 1"/><path d="M6 11h12"/></svg>`)}
      ${sl(12, html`<span>中</span>`)}
      ${sl(46, html`<svg width="16" height="18" viewBox="0 0 16 18"><path d="M2 2l12-2v5H7v2h7l1 8-13 3v-5h8v-2H2z" fill="#f04a1a"/></svg>`)}
      ${sl(62, html`<span>9:26</span><span>2018/4/29</span>`)}
      ${sl(59, html`<svg width="28" height="28" viewBox="0 0 28 28"><path d="M6 3h14v14H6z" fill="#fff"/><path d="M9 7h8M9 10h8M9 13h8" stroke="#333"/><circle cx="17" cy="20" r="8" fill="#3a3a3a" stroke="#888"/><text x="17" y="24" text-anchor="middle" font-size="11" fill="#fff" font-family="Liberation Sans" font-weight="bold">1</text></svg>`, 'nt')}
    </div>`;
  }

  render() {
    return html`
    <div class="title">
      <svg class="logo" viewBox="0 0 15 15"><rect width="15" height="15" rx="2.500" fill="#1a90e8"/><path d="M7.500 2v11M3 7c0 4 9 4 9 0M5 4c1.500-1.500 3.500-1.500 5 0" fill="none" stroke="#fff" stroke-width="1.400"/></svg>
      <span class="tx">广联达BIM钢筋算量软件 GGJ2013 - [C:\\Users\\Administrator.PC-20141127NRHM\\Desktop\\白龙村-2018-02-02-19-24-35</span>
      <svg class="sgs" viewBox="0 0 26 27"><rect y="1" width="26" height="25" rx="4" fill="#f0501e"/><path d="M20 7c-3-2-13-2-13 2s12 3 12 8-11 5-13 2" fill="none" stroke="#fff" stroke-width="4"/></svg>
      <div class="sg"><b>英</b>
        <svg width="9" height="12" viewBox="0 0 9 12" fill="#1a6ab8"><circle cx="2" cy="3" r="1.300"/><path d="M6 5c2 1 2 3-1 6 3-1 4-4 3-6z"/></svg>
        <svg width="16" height="16" viewBox="0 0 16 16" fill="none" stroke="#1a6ab8" stroke-width="1.300" style="margin-left:3px"><circle cx="8" cy="8" r="7"/><path d="M5 5.500v2M11 5.500v2M4.500 10c2 2.500 5 2.500 7 0"/></svg>
        <svg width="12" height="16" viewBox="0 0 12 16" fill="#1a6ab8" style="margin-left:3px"><rect x="3.500" y="0" width="5" height="10" rx="2.500"/><path d="M1 7c0 6 10 6 10 0M6 12v3M3 15.500h6" fill="none" stroke="#1a6ab8"/></svg>
        <svg width="16" height="12" viewBox="0 0 16 12"><rect width="16" height="12" rx="1" fill="#1a6ab8"/><path d="M2 3h12M2 6h12" stroke="#fff" stroke-dasharray="1.500 1"/><path d="M4 9h8" stroke="#fff"/></svg>
        <svg width="16" height="16" viewBox="0 0 16 16" fill="#a8b8c4" style="margin-left:2px"><circle cx="6" cy="4" r="3"/><path d="M1 13c0-6 9-6 9 0z"/><rect x="7" y="8" width="9" height="7" fill="#d8e0e8" stroke="#9ab"/></svg>
        <svg width="15" height="14" viewBox="0 0 15 14" fill="#1a6ab8"><path d="M5 0L0 3l2 3 2-1v9h7V5l2 1 2-3-5-3c-1 2-4 2-5 0z"/></svg>
        <svg width="14" height="16" viewBox="0 0 14 16" fill="none" stroke="#1a6ab8" stroke-width="3" style="margin-left:2px"><path d="M2 15l7-8"/><path d="M8 7c-1-3 2-6 5-5l-2 3 2 2" stroke-width="2"/></svg>
      </div>
      <div class="win">
        <svg width="46" height="23" viewBox="0 0 46 23"><path d="M0 11.500h10" stroke="#111"/></svg>
        <svg width="48" height="23" viewBox="0 0 48 23"><rect x="0.500" y="8.500" width="7" height="8" fill="#fff" stroke="#111"/><path d="M2.500 8.500V6.500h7v8h-2" fill="none" stroke="#111"/></svg>
        <svg width="27" height="23" viewBox="0 0 27 23"><path d="M0 6l10 10M10 6L0 16" stroke="#111"/></svg>
      </div>
    </div>
    <div class="row menu">
      ${bar({ x0: 0, x1: 934, items: MENU }, 0)}
      <div class="tbox">楼梯里高端平板净长是..</div>
      ${bar({ x0: 1127, x1: 1366, items: MENU2 }, 3)}
    </div>
    ${row('r1', 0, R1)}
    <div class="body">
      <div class="left">
        <div class="lhead"><span>模块导航栏</span>
          <svg width="10" height="12" viewBox="0 0 10 12"><path d="M2.500 1h5v5h1.500v1H1V6h1.500zM5 7v4" fill="none" stroke="#fff"/></svg>
          <svg width="10" height="10" viewBox="0 0 10 10" style="margin:0 2px 0 4px"><path d="M1 1l8 8M9 1L1 9" stroke="#fff"/></svg></div>
        <div class="lbtn">工程设置</div>
        <div class="lbtn">绘图输入</div>
        <div class="treeb">
          <div class="ttop">
            <svg width="16" height="16" viewBox="0 0 16 16"><path d="M4 1v6M1 4h6" stroke="#0a5a2a" stroke-width="2"/><path d="M10 7v8M6 11h8" stroke="#0a8a4a" stroke-width="2.400"/></svg>
            <svg width="16" height="16" viewBox="0 0 16 16"><path d="M1 4h7" stroke="#0a5a5a" stroke-width="2"/><path d="M7 12h8" stroke="#0a7a6a" stroke-width="2.400"/></svg>
          </div>
          ${TREE.map(r => r.i ? html`
            <div class="tr ch ${r.l ? 'l' : ''}"><div class="nod ${r.s ? 's' : ''}">${ic(r.i)}<span class="tt">${mix(r.t)}</span></div></div>` : html`
            <div class="tr top">
              <svg class="chev" viewBox="0 0 8 8"><path d=${r.o ? 'M0 2l4 4 4-4' : 'M2 0l4 4-4 4'} fill="none" stroke=${r.o ? '#444' : '#aaa'} stroke-width="1.500"/></svg>
              ${folder(!!r.o)}<span>${mix(r.t)}</span>${r.n ? html`<svg width="16" height="16" viewBox="0 0 16 16" style="margin-left:7px;flex:none">${I.cad}</svg><span class="new">NEW</span>` : ''}
            </div>`)}
        </div>
        <div class="lbtn">单构件输入</div>
        <div class="lbtn">报表预览</div>
      </div>
      <div class="right">
        ${row('r2', 170, R2)}
        ${row('r3', 170, R3)}
        ${row('r4', 170, R4)}
        ${this.canvas()}
        <div class="row r5">
          ${R5a.map((b, i) => bar(b, i ? 2 : 0))}
          <div class="snapx">
            <i class="grip"></i>
            <div class="sel2">不偏移</div><div class="btn2"><i class="arr"></i></div><i class="sep"></i>
            <span class="lb">X=</span><div class="spin">0<i></i></div><span>mm</span>
            <span class="lb2">Y=</span><div class="spin">0<i></i></div><span>mm</span>
            <i class="sep sepm"></i>
            <div class="chk"></div><span style="color:#111">旋转</span>
            <div class="spin w">0.000<i></i></div><span>°</span>
          </div>
        </div>
        <div class="panel">
          <div class="phead">${row('', 170, R6)}</div>
          <div class="pbody">
            <div class="gut"></div>
            <div class="frame">
              <div class="upper">
                <div class="tblwrap">${this.grid()}</div>
                <div class="vs">
                  <div class="sp"><svg width="16" height="8" viewBox="0 0 16 8"><path d="M5 6l3-3 3 3" fill="none" stroke="#555" stroke-width="1.500"/></svg></div>
                  <div class="th"></div>
                  <div class="sp2"><svg width="16" height="8" viewBox="0 0 16 8"><path d="M5 2l3 3 3-3" fill="none" stroke="#555" stroke-width="1.500"/></svg></div>
                </div>
              </div>
              <div class="hs">
                <div class="ha"><svg width="8" height="12" viewBox="0 0 8 12"><path d="M6 2L2 6l4 4" fill="none" stroke="#555" stroke-width="1.600"/></svg></div>
                <div class="th"></div><div class="sp"></div>
                <div class="ha"><svg width="8" height="12" viewBox="0 0 8 12"><path d="M2 2l4 4-4 4" fill="none" stroke="#555" stroke-width="1.600"/></svg></div>
              </div>
            </div>
          </div>
        </div>
      </div>
    </div>
    <div class="status">
      <div style="width:148px"><span class="m">X=90353 Y=3463</span></div>
      <div style="width:78px">${mix('层高:4.5m')}</div>
      <div style="width:98px">${mix('底标高:-0.05m')}</div>
      <div style="width:48px">${mix('1(2)')}</div>
      <div style="width:912px">${mix('按鼠标左键选择一个图元，按右键中止或ESC取消')}</div>
      <div style="flex:1"><span class="m">677.3 FPS</span></div>
    </div>
    ${this.taskbar()}
    <svg class="over" width="1366" height="768" viewBox="0 0 1366 768" fill="#f20000" fill-rule="evenodd">
      <path d="${oval(502.5, 562.5, 116.5, 29.5)}${oval(503, 562.5, 100.5, 25.5)}"/>
      <path d="${oval(1009, 559.5, 44, 23.5)}${oval(1007.5, 559.5, 36.5, 17.5)}"/>
      <path d="${oval(1117.5, 591.5, 22.5, 34.5)}${oval(1117, 591, 16, 29)}"/>
      <circle cx="1100" cy="563" r="3"/>
    </svg>`;
  }
}
